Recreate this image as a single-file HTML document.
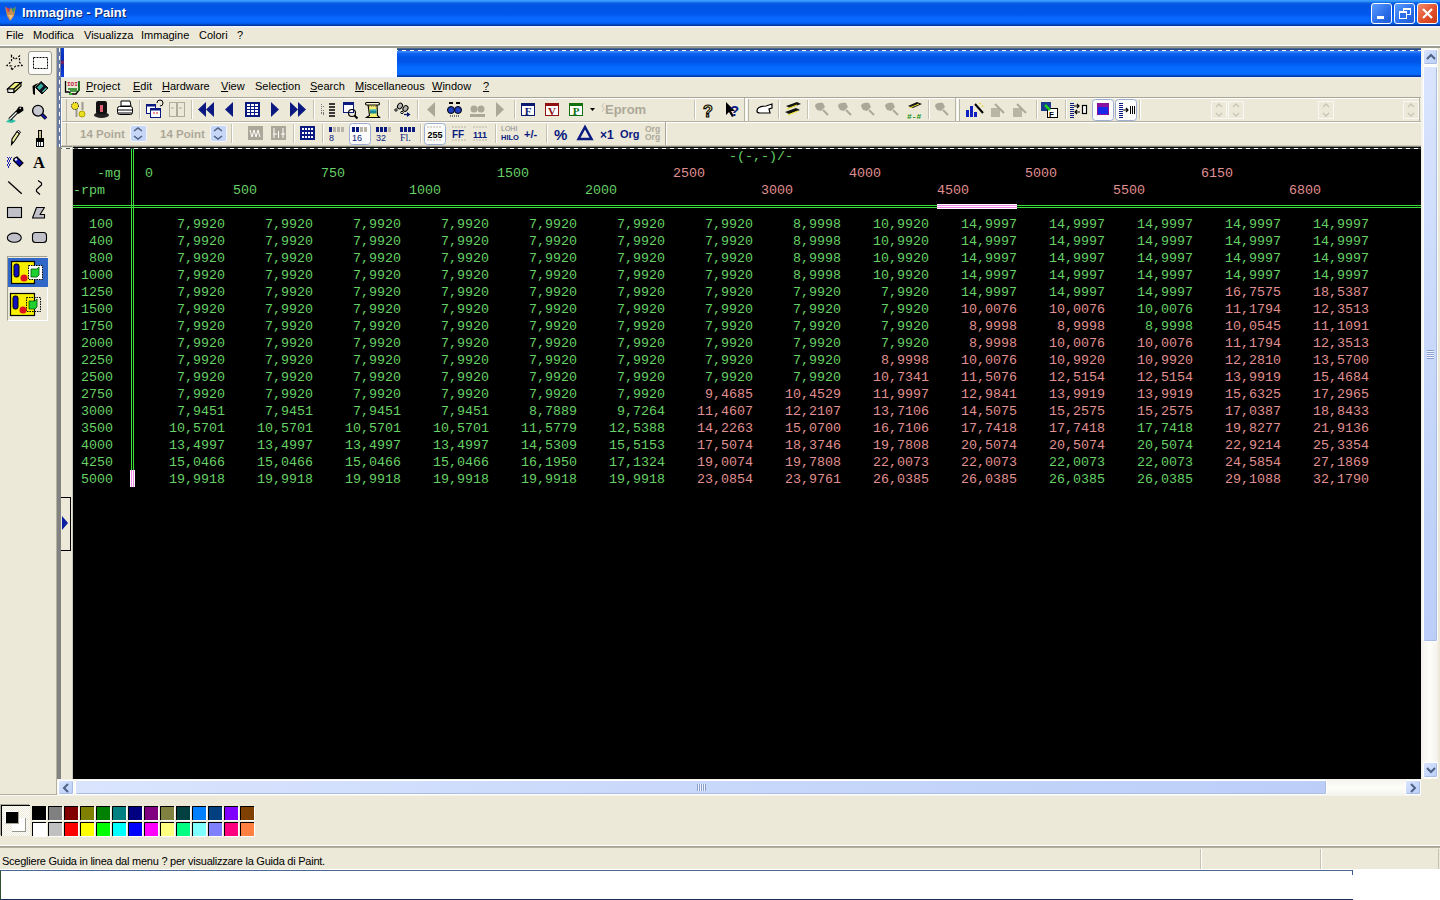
<!DOCTYPE html>
<html><head><meta charset="utf-8">
<style>
*{margin:0;padding:0;box-sizing:border-box}
html,body{width:1440px;height:900px;overflow:hidden;background:#ECE9D8;font-family:"Liberation Sans",sans-serif;font-size:11px;color:#000}
.a{position:absolute}
#title{left:0;top:0;width:1440px;height:26px;background:linear-gradient(#3A9CFF 0px,#3A9CFF 1px,#0A5EE0 3px,#0055E5 5px,#0057EA 14px,#0868FF 18px,#0866FF 22px,#0058E0 24px,#0038A0 25px,#0038A0 26px)}
#title .t{left:22px;top:5px;color:#fff;font-weight:bold;font-size:13px;text-shadow:1px 1px 0 #0A246A}
.wb{top:3px;width:21px;height:21px;border:1px solid #fff;border-radius:3px;background:linear-gradient(135deg,#5A9BFF,#2B6DE8 60%,#1F5BD6)}
#menu{left:0;top:26px;width:1440px;height:20px;background:linear-gradient(#F0F2FF 0,#F0F2FF 1px,#ECE9D8 2px)}
#menu span{position:absolute;top:3px;font-size:11px}
#sep1{left:0;top:45px;width:1440px;height:1px;background:#fff}
#sep2{left:0;top:46px;width:1440px;height:2px;background:#9D9D8F}
#tools{left:0;top:48px;width:57px;height:748px;background:#ECE9D8}
#cvborder{left:57px;top:48px;width:4px;height:731px;background:#828280}
#shot{left:61px;top:48px;width:1361px;height:731px;background:#ECE9D8}
#black{left:73px;top:147px;width:1348px;height:632px;background:#000}
#vscroll{left:1421px;top:48px;width:17px;height:731px;background:linear-gradient(90deg,#F3F1EA,#FEFEFB 50%,#F3F1EA)}
#hscroll{left:57px;top:779px;width:1364px;height:17px;background:linear-gradient(#F3F1EA,#FEFEFB 50%,#F3F1EA)}
.sb{position:absolute;background:linear-gradient(135deg,#DAE4FD,#C8D8FB 50%,#BCCEF8);border:1px solid #fff;box-shadow:inset -1px -1px 0 #A8BCE4;border-radius:2px}
#palette{left:0;top:796px;width:1440px;height:50px;background:#ECE9D8}
#status{left:0;top:846px;width:1440px;height:24px;background:#ECE9D8}
#bottom{left:0;top:869px;width:1440px;height:31px;background:#fff}
.c,.h{position:absolute;font-family:"Liberation Mono",monospace;font-size:13.33px;line-height:17px;white-space:pre;color:#66D266}
.c{width:88px;text-align:right}
.r{color:#E09090}
.gl{position:absolute;background:#38E038}
.im{top:80px;font-size:11px;line-height:13px;white-space:nowrap}
.im u{text-underline-offset:1px}
</style></head><body>
<div id="title" class="a">
<svg class="a" style="left:3px;top:4px" width="15" height="18" viewBox="0 0 15 18"><path d="M2 2 L4 12 L7 17 L11 12 L13 2 L10 8 L8 3 L6 8 Z" fill="#C89050"/><path d="M3 3 L5 9 L7 5Z" fill="#E04040"/><path d="M9 5 L11 9 L12 3Z" fill="#40A040"/><path d="M5 11 L10 11 L8 16Z" fill="#F0C080"/></svg>
<div class="t a">Immagine - Paint</div>
<div class="wb a" style="left:1371px"><div class="a" style="left:5px;top:12px;width:7px;height:3px;background:#fff"></div></div>
<div class="wb a" style="left:1394px"><div class="a" style="left:8px;top:4px;width:8px;height:7px;border:1px solid #fff;border-top-width:2px"></div><div class="a" style="left:4px;top:7px;width:8px;height:8px;border:1px solid #fff;border-top-width:2px;background:#2F6FE8"></div></div>
<div class="wb a" style="left:1417px;background:linear-gradient(135deg,#F08A6A,#E2502A 55%,#C83A18)"><svg class="a" style="left:3px;top:3px" width="13" height="13"><path d="M2 2L11 11M11 2L2 11" stroke="#fff" stroke-width="2.2"/></svg></div>
</div>
<div id="menu" class="a">
<span style="left:6px">File</span><span style="left:33px">Modifica</span><span style="left:84px">Visualizza</span><span style="left:141px">Immagine</span><span style="left:199px">Colori</span><span style="left:237px">?</span>
</div>
<div id="sep1" class="a"></div><div id="sep2" class="a"></div>
<div id="tools" class="a">
<div class="a" style="left:56px;top:0;width:1px;height:747px;background:#B4B1A2"></div><div class="a" style="left:0;top:746px;width:57px;height:1px;background:#B4B1A2"></div><div class="a" style="left:0;top:747px;width:57px;height:1px;background:#F6F4EC"></div>
<div class="a" style="left:28px;top:3px;width:24px;height:24px;background:#FBFBF9;border:1px solid #9B9B8F;border-radius:3px"></div>
<svg class="a" style="left:0;top:0" width="56" height="280" viewBox="0 48 56 280">
<path d="M11.5 55.5 L11.5 61 L7 65.5 L11.5 66 L11.5 70.5 L15.5 66 L22 65.5 L19.5 62 L19.5 56 L15 59.5 Z" fill="none" stroke="#000" stroke-width="1.2" stroke-dasharray="2 1.6"/>
<rect x="33.5" y="57.5" width="14" height="11" fill="none" stroke="#000" stroke-width="1" stroke-dasharray="2 1"/>
<path d="M7.5 89 L14.5 82.5 L21 82.5 L14 89 Z" fill="#F0F080" stroke="#000" stroke-width="1.1"/>
<path d="M7.5 89 L14 89 L14 92.5 L8 92.5 Z" fill="#E8E8E8" stroke="#000" stroke-width="1.1"/>
<path d="M14 89 L21 82.5 L21 86 L14 92.5 Z" fill="#D8D870" stroke="#000" stroke-width="1.1"/>
<path d="M36 84 L38.5 83 L35 87 L35 95 L33 94 L32.5 86 Z" fill="#000"/>
<path d="M41 81.5 L48 88 L42 94 L35.5 87.5 Z" fill="#101020" stroke="#000"/>
<path d="M37 87.5 L41 83.5 L43.5 86 L39.5 90 Z" fill="#30B0A0"/>
<path d="M42.5 92 L46.5 88" stroke="#50C8A8" stroke-width="1.2"/>
<path d="M6 122 L10 118 L16 121 L12 123 Z" fill="#30C0A8"/>
<path d="M9.5 119.5 L17 112" stroke="#000" stroke-width="3.2"/><path d="M9.5 119.5 L17 112" stroke="#fff" stroke-width="1.2"/>
<path d="M15.5 111.5 L19 106.5 L23 107 L23.5 110.5 L18.5 114 Z" fill="#000"/><circle cx="20.3" cy="108.3" r=".8" fill="#fff"/>
<circle cx="38" cy="110.7" r="5.4" fill="#C8C8D0" stroke="#000" stroke-width="1.3"/>
<path d="M42 114.5 L46 118.5" stroke="#000" stroke-width="3.6"/><path d="M42 114.5 L46 118.5" stroke="#1818A0" stroke-width="2"/>
<path d="M11.5 144.5 L12 139 L17 131.5 L19.5 133.5 L14.5 141 Z" fill="#F0F0A0" stroke="#000" stroke-width="1.1"/>
<path d="M17 131.5 L18.5 130.5 L20.5 132 L19.5 133.5 Z" fill="#fff" stroke="#000" stroke-width="1"/>
<path d="M11.5 144.5 L12.2 141 L13.6 142.2 Z" fill="#000"/>
<rect x="38.5" y="130.5" width="3" height="8" fill="#C8C090" stroke="#000"/>
<rect x="36.5" y="138.5" width="7" height="3" fill="#000" stroke="#000"/>
<rect x="36.5" y="141.5" width="7" height="5" fill="#fff" stroke="#000"/><path d="M38.5 142V146M40.5 142V146" stroke="#000" stroke-width=".8"/>
<g fill="#2020B0"><rect x="7" y="157" width="1" height="1"/><rect x="9" y="157" width="1" height="1"/><rect x="11" y="157" width="1" height="1"/><rect x="8" y="159" width="1" height="1"/><rect x="10" y="159" width="1" height="1"/><rect x="7" y="161" width="1" height="1"/><rect x="9" y="161" width="1" height="1"/><rect x="8" y="163" width="1" height="1"/><rect x="10" y="163" width="1" height="1"/><rect x="7" y="165" width="1" height="1"/><rect x="9" y="165" width="1" height="1"/><rect x="8" y="167" width="1" height="1"/><rect x="8" y="158" width="1" height="1"/><rect x="10" y="158" width="1" height="1"/><rect x="7" y="160" width="1" height="1"/><rect x="9" y="160" width="1" height="1"/><rect x="8" y="162" width="1" height="1"/><rect x="7" y="164" width="1" height="1"/><rect x="9" y="164" width="1" height="1"/><rect x="8" y="166" width="1" height="1"/></g>
<path d="M14 158.5 L17 157 L23 163 L19.5 166.5 L13.5 160.5 Z" fill="#0A0AA8" stroke="#000" stroke-width="1.1"/>
<path d="M14.5 159 L16.5 158 L17.5 160 L15.5 161 Z" fill="#fff"/>
<text x="39" y="167.5" text-anchor="middle" font-family="Liberation Serif" font-weight="bold" font-size="16.5" fill="#000">A</text>
<path d="M8.2 181.4 L21.7 193.7" stroke="#000" stroke-width="1.3"/>
<path d="M38 180.5 L41.5 183 L41.5 185 L36.5 189.5 L36.5 191.5 L40 194.5" stroke="#000" stroke-width="1.2" fill="none"/>
<rect x="7.5" y="207.5" width="14" height="10" fill="#C0C0C8" stroke="#000" stroke-width="1.1"/>
<path d="M36.5 207.5 L44.5 207.5 L40 214.5 L44.5 214.5 L44.5 218 L32.5 218 Z" fill="#C0C0C8" stroke="#000" stroke-width="1.1" stroke-linejoin="round"/>
<ellipse cx="14.3" cy="237.7" rx="7" ry="4.6" fill="#C0C0C8" stroke="#000" stroke-width="1.1"/>
<rect x="32.5" y="232.5" width="14" height="10" rx="3" fill="#C0C0C8" stroke="#000" stroke-width="1.1"/>
</svg>
<div class="a" style="left:7px;top:208px;width:41px;height:65px;border:1px solid #fff;border-top-color:#A0A090;border-left-color:#A0A090"></div>
<div class="a" style="left:8px;top:210px;width:40px;height:29px;background:#3168C8"></div>
<svg class="a" style="left:8px;top:210px" width="40" height="64" viewBox="0 0 40 64">
<rect x="3.5" y="3.5" width="23" height="22" fill="#F8F000" stroke="#000" stroke-width="1.2"/>
<rect x="20.5" y="7.5" width="14" height="14" fill="#fff" stroke="#000" stroke-dasharray="1.5 1"/>
<rect x="6" y="6" width="5" height="13" rx="2" fill="#1010C0" stroke="#000"/><circle cx="16" cy="20" r="3.5" fill="#E01020"/>
<path d="M23 11 L29 11 L31 9 L31 17 L29 19 L23 19Z" fill="#20D030" stroke="#005000" stroke-width="0.8"/>
<rect x="2.5" y="35.5" width="24" height="22" fill="#F8F000" stroke="#000" stroke-width="1.2"/>
<rect x="18.5" y="39.5" width="14" height="14" fill="none" stroke="#000" stroke-dasharray="1.5 1"/>
<rect x="5" y="38" width="5" height="13" rx="2" fill="#1010C0" stroke="#000"/><circle cx="15" cy="52" r="3.5" fill="#E01020"/>
<path d="M21 43 L27 43 L29 41 L29 49 L27 51 L21 51Z" fill="#20D030" stroke="#005000" stroke-width="0.8"/>
</svg>
</div>
<div id="shot" class="a"></div>
<div id="cvborder" class="a"></div>
<div class="a" style="left:57px;top:48px;width:4px;height:99px;background:#6A7CA4"></div><div class="a" style="left:59px;top:48px;width:1px;height:99px;background:repeating-linear-gradient(#fff 0 4px,transparent 4px 8px)"></div>
<div class="a" style="left:61px;top:48px;width:336px;height:29px;background:#fff"></div>
<div class="a" style="left:61px;top:48px;width:3px;height:29px;background:linear-gradient(#1040D0,#0A2CB8 40%,#8A2050 50%,#0A2CB8 60%,#1040E0)"></div>
<div class="a" style="left:397px;top:48px;width:1024px;height:29px;background:linear-gradient(#4A6890 0,#4A6890 1px,#2A4A88 1px,#2A4A88 2px,#2A5CB8 2px,#2A5CB8 3px,#3A88FF 3px,#3A88FF 4px,#1466F2 5px,#0054E6 9px,#0054E6 14px,#0062F8 17px,#066CFF 20px,#066CFF 26px,#005CE8 27px,#003AA8 28px,#003AA8 29px)"></div>
<div class="a" style="left:397px;top:50px;width:1024px;height:1px;background:repeating-linear-gradient(90deg,#fff 0 4px,transparent 4px 8px) 5px 0/8px 1px"></div>
<div class="a" style="left:61px;top:77px;width:1360px;height:1px;background:#E8EEF8"></div>
<div class="a" style="left:61px;top:78px;width:1360px;height:20px;background:#ECE9D8"></div>
<svg class="a" style="left:64px;top:79px" width="18" height="17" viewBox="0 0 18 17"><path d="M1.5 2V13H5L7 15H12L15 11V2" fill="none" stroke="#000" stroke-width="1.3"/><text x="3" y="7" font-family="Liberation Mono" font-weight="bold" font-size="6" fill="#C02040">IOI</text><path d="M4 10h9M6 12h7" stroke="#108010" stroke-width="1.3"/><path d="M15 3V12" stroke="#108010" stroke-width="1.5"/><path d="M5 15h3" stroke="#30B030" stroke-width="2"/></svg>
<div class="im a" style="left:86px"><u>P</u>roject</div>
<div class="im a" style="left:133px"><u>E</u>dit</div>
<div class="im a" style="left:162px"><u>H</u>ardware</div>
<div class="im a" style="left:221px"><u>V</u>iew</div>
<div class="im a" style="left:255px">Selec<u>t</u>ion</div>
<div class="im a" style="left:310px"><u>S</u>earch</div>
<div class="im a" style="left:355px"><u>M</u>iscellaneous</div>
<div class="im a" style="left:432px"><u>W</u>indow</div>
<div class="im a" style="left:483px"><u>?</u></div>
<svg class="a" style="left:0;top:0" width="1440" height="150" viewBox="0 0 1440 150"><rect x="61" y="97" width="1360" height="49" fill="#ECE9D8"/><path d="M61 97.5H1421" stroke="#A8A596"/><path d="M61 98.5H1421" stroke="#fff"/><path d="M61 121.5H1421" stroke="#B5B2A3"/><path d="M61 122.5H1421" stroke="#fff"/><path d="M61 145.5H1421" stroke="#C8C5B5"/><path d="M61 146.5H1421" stroke="#8A887C"/><path d="M61.5 98V146" stroke="#fff"/><path d="M66.5 99V121M66.5 123V145" stroke="#B8B5A6"/><path d="M744.5 98V121" stroke="#B8B5A6"/><path d="M746.5 98V121" stroke="#fff" stroke-width="2"/><path d="M748.5 99V121" stroke="#B8B5A6"/><path d="M955.5 98V121" stroke="#B8B5A6"/><path d="M957.5 98V121" stroke="#fff" stroke-width="2"/><path d="M959.5 99V121" stroke="#B8B5A6"/><path d="M1419.5 98V121" stroke="#B8B5A6"/><path d="M665.5 122V145" stroke="#A8A596"/><path d="M666.5 122V145" stroke="#fff"/><path d="M139.5 100V119" stroke="#C5C2B2"/><path d="M140.5 100V119" stroke="#fff"/><path d="M191.5 100V119" stroke="#C5C2B2"/><path d="M192.5 100V119" stroke="#fff"/><path d="M313.5 100V119" stroke="#C5C2B2"/><path d="M314.5 100V119" stroke="#fff"/><path d="M388.5 100V119" stroke="#C5C2B2"/><path d="M389.5 100V119" stroke="#fff"/><path d="M417.5 100V119" stroke="#C5C2B2"/><path d="M418.5 100V119" stroke="#fff"/><path d="M514.5 100V119" stroke="#C5C2B2"/><path d="M515.5 100V119" stroke="#fff"/><path d="M694.5 100V119" stroke="#C5C2B2"/><path d="M695.5 100V119" stroke="#fff"/><path d="M778.5 100V119" stroke="#C5C2B2"/><path d="M779.5 100V119" stroke="#fff"/><path d="M807.5 100V119" stroke="#C5C2B2"/><path d="M808.5 100V119" stroke="#fff"/><path d="M928.5 100V119" stroke="#C5C2B2"/><path d="M929.5 100V119" stroke="#fff"/><path d="M1036.5 100V119" stroke="#C5C2B2"/><path d="M1037.5 100V119" stroke="#fff"/><path d="M1065.5 100V119" stroke="#C5C2B2"/><path d="M1066.5 100V119" stroke="#fff"/><path d="M1139.5 100V119" stroke="#C5C2B2"/><path d="M1140.5 100V119" stroke="#fff"/><path d="M231.5 124V143" stroke="#C5C2B2"/><path d="M232.5 124V143" stroke="#fff"/><path d="M293.5 124V143" stroke="#C5C2B2"/><path d="M294.5 124V143" stroke="#fff"/><path d="M322.5 124V143" stroke="#C5C2B2"/><path d="M323.5 124V143" stroke="#fff"/><path d="M420.5 124V143" stroke="#C5C2B2"/><path d="M421.5 124V143" stroke="#fff"/><path d="M495.5 124V143" stroke="#C5C2B2"/><path d="M496.5 124V143" stroke="#fff"/><path d="M546.5 124V143" stroke="#C5C2B2"/><path d="M547.5 124V143" stroke="#fff"/><path d="M76.5 102V117M82.5 102V110" stroke="#9A9A90" stroke-width="2"/><circle cx="75" cy="106" r="3.5" fill="#F0E020" stroke="#000" stroke-dasharray="1 1"/><circle cx="82" cy="114" r="3" fill="#E8E020" stroke="#B0A000"/><ellipse cx="101.5" cy="115" rx="7.5" ry="3" fill="#222"/><rect x="96" y="101" width="11" height="13" rx="2" fill="#111"/><rect x="100" y="105" width="3" height="7" fill="#E06070"/><path d="M121 101H130L131 106H121Z" fill="#fff" stroke="#000"/><rect x="117.5" y="106.5" width="15" height="8" rx="2" fill="#fff" stroke="#000"/><path d="M118 110H132M118 113H132" stroke="#000"/><rect x="146.5" y="104.5" width="9" height="9" fill="#fff" stroke="#0A1A80"/><rect x="146.5" y="104.5" width="9" height="2" fill="#0A1A80"/><rect x="150.5" y="108.5" width="10" height="9" fill="#fff" stroke="#0A1A80"/><rect x="150.5" y="108.5" width="10" height="2" fill="#0A1A80"/><path d="M153 113H155M156 113H158" stroke="#D02020"/><path d="M157 103 A3 3 0 1 1 160 106" stroke="#000" fill="none"/><rect x="169.5" y="102.5" width="7" height="14" fill="none" stroke="#B0AC9C"/><rect x="177.5" y="102.5" width="7" height="14" fill="none" stroke="#B0AC9C"/><path d="M171 108h3M179 108h3" stroke="#B0AC9C"/><path d="M198 109.5L206 102V117Z M206 109.5L214 102V117Z" fill="#0A1A80"/><path d="M225 109.5L233 102V117Z" fill="#0A1A80"/><rect x="245" y="102" width="15" height="15" fill="#0A1A80"/><rect x="247" y="104" width="3" height="2" fill="#fff"/><rect x="247" y="107" width="3" height="2" fill="#fff"/><rect x="247" y="110" width="3" height="2" fill="#fff"/><rect x="247" y="113" width="3" height="2" fill="#fff"/><rect x="251" y="104" width="3" height="2" fill="#fff"/><rect x="251" y="107" width="3" height="2" fill="#fff"/><rect x="251" y="110" width="3" height="2" fill="#fff"/><rect x="251" y="113" width="3" height="2" fill="#fff"/><rect x="255" y="104" width="3" height="2" fill="#fff"/><rect x="255" y="107" width="3" height="2" fill="#fff"/><rect x="255" y="110" width="3" height="2" fill="#fff"/><rect x="255" y="113" width="3" height="2" fill="#fff"/><path d="M271 102V117L279 109.5Z" fill="#0A1A80"/><path d="M290 102V117L298 109.5Z M298 102V117L306 109.5Z" fill="#0A1A80"/><path d="M321.5 104V114M321 106.5h4M321 113.5h4M323.5 110v5" stroke="#777" stroke-dasharray="1 1"/><path d="M329 104h6M329 107h6M329 110h6M329 113h6M329 116h6" stroke="#000" stroke-width="1.5"/><rect x="343.5" y="102.5" width="10" height="10" fill="#fff" stroke="#0A1A80"/><rect x="343" y="102" width="11" height="3" fill="#0A1A80"/><circle cx="352" cy="113" r="3.5" fill="none" stroke="#000" stroke-width="1.2"/><path d="M354.5 115.5L357.5 118.5" stroke="#000" stroke-width="2"/><path d="M368 104.5L369.5 115.5L366.5 117.5H379.5L377.5 115.5L377 104.5Z" fill="#F4F070" stroke="#000" stroke-width="1.1"/><rect x="365.5" y="102.5" width="14" height="2.5" rx="1.2" fill="#F8F8D0" stroke="#000" stroke-width="1.1"/><path d="M369 106.5h7" stroke="#B08060" stroke-dasharray="1 1"/><rect x="370" y="109.5" width="6.5" height="4" fill="#1A8890"/><rect x="370" y="109.5" width="6.5" height="1" fill="#60D0E0"/><ellipse cx="400" cy="106" rx="2.3" ry="3" transform="rotate(35 400 106)" fill="#B8B8B0" stroke="#000" stroke-width="1"/><ellipse cx="405.5" cy="108.5" rx="2.3" ry="3" transform="rotate(35 405.5 108.5)" fill="#B8B8B0" stroke="#000" stroke-width="1"/><ellipse cx="396" cy="110" rx="1.3" ry="1.1" fill="#fff" stroke="#000" stroke-width="1"/><ellipse cx="402" cy="112.5" rx="1.3" ry="1.1" fill="#fff" stroke="#000" stroke-width="1"/><path d="M404 114.5H409" stroke="#0A1A70" stroke-width="1.3"/><path d="M407 112L410.5 114.5L407 117Z" fill="#0A1A70"/><path d="M427 109.5L435 102V117Z" fill="#ACA899"/><path d="M496 102V117L504 109.5Z" fill="#ACA899"/><circle cx="451" cy="110" r="3.5" fill="#2040C0" stroke="#000"/><circle cx="458" cy="110" r="3.5" fill="#2040C0" stroke="#000"/><path d="M449 103h4M456 103h4" stroke="#000" stroke-width="2"/><path d="M450 116h10" stroke="#000" stroke-dasharray="1 1"/><circle cx="474" cy="109" r="3.5" fill="#ACA899"/><circle cx="481" cy="109" r="3.5" fill="#ACA899"/><rect x="470" y="114" width="15" height="3" fill="#ACA899"/><rect x="521.5" y="103.5" width="13" height="12" fill="#fff" stroke="#0A1A70"/><rect x="521" y="103" width="14" height="3" fill="#0A1A70"/><text x="528" y="115" text-anchor="middle" font-family="Liberation Serif" font-weight="bold" font-size="11" fill="#0A1A70">F</text><rect x="545.5" y="103.5" width="13" height="12" fill="#fff" stroke="#901010"/><rect x="545" y="103" width="14" height="3" fill="#901010"/><text x="552" y="115" text-anchor="middle" font-family="Liberation Serif" font-weight="bold" font-size="11" fill="#901010">V</text><rect x="569.5" y="103.5" width="13" height="12" fill="#fff" stroke="#107010"/><rect x="569" y="103" width="14" height="3" fill="#107010"/><text x="576" y="115" text-anchor="middle" font-family="Liberation Serif" font-weight="bold" font-size="11" fill="#107010">P</text><path d="M590 108h5l-2.5 3z" fill="#000"/><text x="605" y="114" font-family="Liberation Sans" font-weight="bold" font-size="13" fill="#ACA899">Eprom</text><path d="M604 103l-2 3 2 3-2 3" stroke="#C8C5B8" fill="none"/><text x="703" y="117" font-family="Liberation Sans" font-weight="bold" font-size="16" fill="#F8F0A0" stroke="#000" stroke-width="1.1">?</text><path d="M726 102V115L729 112L732 117L734 116L731 111H735Z" fill="#000"/><text x="730" y="116" font-family="Liberation Sans" font-weight="bold" font-size="15" fill="#0A1A80">?</text><path d="M757 111C757 107 762 106 766 106L772 104V108L769 109L770 113H760C758 113 757 112 757 111Z" fill="#fff" stroke="#000" stroke-width="1.2"/><path d="M786 106L797 102L801 104L790 108Z" fill="#111"/><path d="M785 112L796 108L800 110L789 114Z" fill="#111"/><path d="M787 109L797 105M788 115L798 111" stroke="#E8E030" stroke-width="1.2"/><path d="M815 106C815 103 820 102 823 103L825 107L821 111L817 110Z" fill="#ACA899"/><path d="M823 110L828 115" stroke="#ACA899" stroke-width="2"/><path d="M838 106C838 103 843 102 846 103L848 107L844 111L840 110Z" fill="#ACA899"/><path d="M846 110L851 115" stroke="#ACA899" stroke-width="2"/><path d="M861 106C861 103 866 102 869 103L871 107L867 111L863 110Z" fill="#ACA899"/><path d="M869 110L874 115" stroke="#ACA899" stroke-width="2"/><path d="M885 106C885 103 890 102 893 103L895 107L891 111L887 110Z" fill="#ACA899"/><path d="M893 110L898 115" stroke="#ACA899" stroke-width="2"/><path d="M935 106C935 103 940 102 943 103L945 107L941 111L937 110Z" fill="#ACA899"/><path d="M943 110L948 115" stroke="#ACA899" stroke-width="2"/><path d="M908 106L917 102L922 104L913 108Z" fill="#111"/><path d="M909 108L919 104" stroke="#E8E030"/><text x="907" y="119" font-family="Liberation Mono" font-weight="bold" font-size="8" fill="#109010">#-#</text><rect x="966" y="110" width="3" height="7" fill="#1020C0"/><rect x="970" y="106" width="3" height="11" fill="#1020C0"/><rect x="974" y="112" width="3" height="5" fill="#1020C0"/><path d="M975 104L983 113" stroke="#000" stroke-width="2"/><path d="M979 103l2 1M982 105l1 2" stroke="#E8D020"/><rect x="991" y="108" width="9" height="9" fill="#ACA899" opacity=".8"/><path d="M995 104L1004 113" stroke="#ACA899" stroke-width="2"/><rect x="1013" y="108" width="9" height="9" fill="#ACA899" opacity=".8"/><path d="M1017 104L1026 113" stroke="#ACA899" stroke-width="2"/><rect x="1041" y="102" width="10" height="9" fill="#1A3A90"/><rect x="1047.5" y="108.5" width="10" height="9" fill="#fff" stroke="#000"/><text x="1049" y="116.5" font-family="Liberation Sans" font-weight="bold" font-size="8" fill="#000">F</text><path d="M1045 105L1050 110" stroke="#20D020" stroke-width="2.5"/><path d="M1070 103.5h4M1070 105.5h4M1070 107.5h4M1070 109.5h4M1070 111.5h4M1070 113.5h4M1070 115.5h4M1070 117.5h4" stroke="#0A1A80"/><path d="M1074 106h5M1077 104l2 2-2 2M1080 112h-5M1077 110l-2 2 2 2" stroke="#000" stroke-width="1.2" fill="none"/><rect x="1082.5" y="105.5" width="4" height="8" fill="#fff" stroke="#000" stroke-width="1.2"/><rect x="1092.5" y="99.5" width="21" height="21" rx="3" fill="#FCFCFA" stroke="#9DAED0"/><rect x="1097" y="103" width="12" height="12" fill="#8A10A0"/><rect x="1098" y="107" width="10" height="7" fill="#1828E8"/><rect x="1115.5" y="99.5" width="21" height="21" rx="3" fill="#FCFCFA" stroke="#9DAED0"/><path d="M1119 103.5h4M1119 105.5h4M1119 107.5h4M1119 109.5h4M1119 111.5h4M1119 113.5h4M1119 115.5h4M1119 117.5h4" stroke="#0A1A80"/><path d="M1123 110h5M1126 108l2 2-2 2" stroke="#000" stroke-width="1.2" fill="none"/><path d="M1130.5 106V114M1132.5 106V114M1134.5 106V114" stroke="#000"/><rect x="1211.5" y="101.5" width="15" height="17" fill="none" stroke="#F8F8F4"/><path d="M1216 107l3-3 3 3M1216 113l3 3 3-3" stroke="#C8C5B8" stroke-width="1.3" fill="none"/><rect x="1228.5" y="101.5" width="15" height="17" fill="none" stroke="#F8F8F4"/><path d="M1233 107l3-3 3 3M1233 113l3 3 3-3" stroke="#C8C5B8" stroke-width="1.3" fill="none"/><rect x="1318.5" y="101.5" width="15" height="17" fill="none" stroke="#F8F8F4"/><path d="M1323 107l3-3 3 3M1323 113l3 3 3-3" stroke="#C8C5B8" stroke-width="1.3" fill="none"/><rect x="1403.5" y="101.5" width="15" height="17" fill="none" stroke="#F8F8F4"/><path d="M1408 107l3-3 3 3M1408 113l3 3 3-3" stroke="#C8C5B8" stroke-width="1.3" fill="none"/><text x="80" y="138" font-family="Liberation Sans" font-weight="bold" font-size="11.5" fill="#ACA899">14 Point</text><text x="160" y="138" font-family="Liberation Sans" font-weight="bold" font-size="11.5" fill="#ACA899">14 Point</text><rect x="130.5" y="125.5" width="16" height="16" rx="2" fill="#C6D6F6" stroke="#F4F6FC"/><path d="M134 131l4-3 4 3M134 136l4 3 4-3" stroke="#4D6185" stroke-width="1.5" fill="none"/><rect x="210.5" y="125.5" width="16" height="16" rx="2" fill="#C6D6F6" stroke="#F4F6FC"/><path d="M214 131l4-3 4 3M214 136l4 3 4-3" stroke="#4D6185" stroke-width="1.5" fill="none"/><rect x="248" y="126" width="15" height="14" fill="#ACA899"/><path d="M250 130l2 7 2-7 2 7 2-7 2 7" stroke="#fff" fill="none"/><rect x="271" y="126" width="15" height="14" fill="#ACA899"/><path d="M274 128v10M278.5 131v7M283 128v10M273 134h4M281 134h4" stroke="#fff" fill="none"/><rect x="300" y="126" width="15" height="14" fill="#0A1A80"/><rect x="302" y="128" width="2" height="2" fill="#fff"/><rect x="302" y="132" width="2" height="2" fill="#fff"/><rect x="302" y="136" width="2" height="2" fill="#fff"/><rect x="305" y="128" width="2" height="2" fill="#fff"/><rect x="305" y="132" width="2" height="2" fill="#fff"/><rect x="305" y="136" width="2" height="2" fill="#fff"/><rect x="308" y="128" width="2" height="2" fill="#fff"/><rect x="308" y="132" width="2" height="2" fill="#fff"/><rect x="308" y="136" width="2" height="2" fill="#fff"/><rect x="311" y="128" width="2" height="2" fill="#fff"/><rect x="311" y="132" width="2" height="2" fill="#fff"/><rect x="311" y="136" width="2" height="2" fill="#fff"/><rect x="349.5" y="123.5" width="21" height="21" rx="3" fill="#FCFCFA" stroke="#9DAED0"/><rect x="329" y="127" width="3" height="5" fill="#0A1A80"/><rect x="333" y="127" width="3" height="5" fill="#B8B5A8"/><rect x="337" y="127" width="3" height="5" fill="#B8B5A8"/><rect x="341" y="127" width="3" height="5" fill="#B8B5A8"/><rect x="352" y="127" width="3" height="5" fill="#0A1A80"/><rect x="356" y="127" width="3" height="5" fill="#0A1A80"/><rect x="360" y="127" width="3" height="5" fill="#B8B5A8"/><rect x="364" y="127" width="3" height="5" fill="#B8B5A8"/><rect x="376" y="127" width="3" height="5" fill="#0A1A80"/><rect x="380" y="127" width="3" height="5" fill="#0A1A80"/><rect x="384" y="127" width="3" height="5" fill="#0A1A80"/><rect x="388" y="127" width="3" height="5" fill="#B8B5A8"/><rect x="400" y="127" width="3" height="5" fill="#0A1A80"/><rect x="404" y="127" width="3" height="5" fill="#0A1A80"/><rect x="408" y="127" width="3" height="5" fill="#0A1A80"/><rect x="412" y="127" width="3" height="5" fill="#0A1A80"/><text x="329" y="141" font-family="Liberation Sans" font-size="9" fill="#0A1A80">8</text><text x="352" y="141" font-family="Liberation Sans" font-size="9" fill="#0A1A80">16</text><text x="376" y="141" font-family="Liberation Sans" font-size="9" fill="#0A1A80">32</text><text x="400" y="141" font-family="Liberation Serif" font-size="10" fill="#0A1A80">Fl.</text><rect x="424.5" y="123.5" width="21" height="21" rx="3" fill="#FCFCFA" stroke="#9DAED0"/><text x="435" y="138" text-anchor="middle" font-family="Liberation Sans" font-weight="bold" font-size="9" fill="#000">255</text><text x="458" y="138" text-anchor="middle" font-family="Liberation Sans" font-weight="bold" font-size="10" fill="#0A1A80">FF</text><text x="480" y="138" text-anchor="middle" font-family="Liberation Sans" font-weight="bold" font-size="9" fill="#0A1A80">111</text><path d="M427 127h14M427 140h14" stroke="#B8B5A8" stroke-dasharray="2 1"/><path d="M452 127h14M452 140h14" stroke="#B8B5A8" stroke-dasharray="2 1"/><path d="M473 127h14M473 140h14" stroke="#B8B5A8" stroke-dasharray="2 1"/><text x="501" y="131" font-family="Liberation Sans" font-size="7" fill="#888">LOHI</text><text x="501" y="140" font-family="Liberation Sans" font-weight="bold" font-size="7.5" fill="#0A1A80">HILO</text><text x="524" y="138" font-family="Liberation Sans" font-weight="bold" font-size="11" fill="#0A1A80">+/-</text><text x="554" y="140" font-family="Liberation Sans" font-weight="bold" font-size="15" fill="#0A1A80">%</text><path d="M585 127L591.5 139H578.5Z" fill="none" stroke="#0A1A80" stroke-width="2.5"/><text x="600" y="139" font-family="Liberation Sans" font-weight="bold" font-size="12" fill="#0A1A80">×1</text><text x="620" y="138" font-family="Liberation Sans" font-weight="bold" font-size="11" fill="#0A1A80">Org</text><text x="645" y="132" font-family="Liberation Sans" font-weight="bold" font-size="8.5" fill="#ACA899">Org</text><text x="645" y="140" font-family="Liberation Sans" font-weight="bold" font-size="8.5" fill="#ACA899">Org</text></svg>
<div id="black" class="a"></div>
<div class="a" style="left:61px;top:148px;width:1360px;height:1px;background:repeating-linear-gradient(90deg,#fff 0 4px,#4A5858 4px 8px) 1px 0/8px 1px"></div>
<div class="a" style="left:72px;top:146px;width:1px;height:633px;background:#C8C6BA"></div>
<div class="gl" style="left:73px;top:205px;width:1348px;height:1px"></div>
<div class="gl" style="left:73px;top:207px;width:1348px;height:1px"></div>
<div class="gl" style="left:131px;top:149px;width:1px;height:321px"></div>
<div class="gl" style="left:133px;top:149px;width:1px;height:321px"></div>
<div class="a" style="left:937px;top:204px;width:80px;height:5px;background:repeating-linear-gradient(#fff 0 1px,#F088E8 1px 2px)"></div>
<div class="a" style="left:130px;top:470px;width:5px;height:17px;background:repeating-linear-gradient(90deg,#fff 0 1px,#F088E8 1px 2px)"></div>
<div class="c" style="top:216px;left:33px;width:80px;text-align:right">100</div>
<div class="c g" style="top:216px;left:137px">7,9920</div>
<div class="c g" style="top:216px;left:225px">7,9920</div>
<div class="c g" style="top:216px;left:313px">7,9920</div>
<div class="c g" style="top:216px;left:401px">7,9920</div>
<div class="c g" style="top:216px;left:489px">7,9920</div>
<div class="c g" style="top:216px;left:577px">7,9920</div>
<div class="c g" style="top:216px;left:665px">7,9920</div>
<div class="c g" style="top:216px;left:753px">8,9998</div>
<div class="c g" style="top:216px;left:841px">10,9920</div>
<div class="c g" style="top:216px;left:929px">14,9997</div>
<div class="c g" style="top:216px;left:1017px">14,9997</div>
<div class="c g" style="top:216px;left:1105px">14,9997</div>
<div class="c g" style="top:216px;left:1193px">14,9997</div>
<div class="c g" style="top:216px;left:1281px">14,9997</div>
<div class="c" style="top:233px;left:33px;width:80px;text-align:right">400</div>
<div class="c g" style="top:233px;left:137px">7,9920</div>
<div class="c g" style="top:233px;left:225px">7,9920</div>
<div class="c g" style="top:233px;left:313px">7,9920</div>
<div class="c g" style="top:233px;left:401px">7,9920</div>
<div class="c g" style="top:233px;left:489px">7,9920</div>
<div class="c g" style="top:233px;left:577px">7,9920</div>
<div class="c g" style="top:233px;left:665px">7,9920</div>
<div class="c g" style="top:233px;left:753px">8,9998</div>
<div class="c g" style="top:233px;left:841px">10,9920</div>
<div class="c g" style="top:233px;left:929px">14,9997</div>
<div class="c g" style="top:233px;left:1017px">14,9997</div>
<div class="c g" style="top:233px;left:1105px">14,9997</div>
<div class="c g" style="top:233px;left:1193px">14,9997</div>
<div class="c g" style="top:233px;left:1281px">14,9997</div>
<div class="c" style="top:250px;left:33px;width:80px;text-align:right">800</div>
<div class="c g" style="top:250px;left:137px">7,9920</div>
<div class="c g" style="top:250px;left:225px">7,9920</div>
<div class="c g" style="top:250px;left:313px">7,9920</div>
<div class="c g" style="top:250px;left:401px">7,9920</div>
<div class="c g" style="top:250px;left:489px">7,9920</div>
<div class="c g" style="top:250px;left:577px">7,9920</div>
<div class="c g" style="top:250px;left:665px">7,9920</div>
<div class="c g" style="top:250px;left:753px">8,9998</div>
<div class="c g" style="top:250px;left:841px">10,9920</div>
<div class="c g" style="top:250px;left:929px">14,9997</div>
<div class="c g" style="top:250px;left:1017px">14,9997</div>
<div class="c g" style="top:250px;left:1105px">14,9997</div>
<div class="c g" style="top:250px;left:1193px">14,9997</div>
<div class="c g" style="top:250px;left:1281px">14,9997</div>
<div class="c" style="top:267px;left:33px;width:80px;text-align:right">1000</div>
<div class="c g" style="top:267px;left:137px">7,9920</div>
<div class="c g" style="top:267px;left:225px">7,9920</div>
<div class="c g" style="top:267px;left:313px">7,9920</div>
<div class="c g" style="top:267px;left:401px">7,9920</div>
<div class="c g" style="top:267px;left:489px">7,9920</div>
<div class="c g" style="top:267px;left:577px">7,9920</div>
<div class="c g" style="top:267px;left:665px">7,9920</div>
<div class="c g" style="top:267px;left:753px">8,9998</div>
<div class="c g" style="top:267px;left:841px">10,9920</div>
<div class="c g" style="top:267px;left:929px">14,9997</div>
<div class="c g" style="top:267px;left:1017px">14,9997</div>
<div class="c g" style="top:267px;left:1105px">14,9997</div>
<div class="c g" style="top:267px;left:1193px">14,9997</div>
<div class="c g" style="top:267px;left:1281px">14,9997</div>
<div class="c" style="top:284px;left:33px;width:80px;text-align:right">1250</div>
<div class="c g" style="top:284px;left:137px">7,9920</div>
<div class="c g" style="top:284px;left:225px">7,9920</div>
<div class="c g" style="top:284px;left:313px">7,9920</div>
<div class="c g" style="top:284px;left:401px">7,9920</div>
<div class="c g" style="top:284px;left:489px">7,9920</div>
<div class="c g" style="top:284px;left:577px">7,9920</div>
<div class="c g" style="top:284px;left:665px">7,9920</div>
<div class="c g" style="top:284px;left:753px">7,9920</div>
<div class="c g" style="top:284px;left:841px">7,9920</div>
<div class="c g" style="top:284px;left:929px">14,9997</div>
<div class="c g" style="top:284px;left:1017px">14,9997</div>
<div class="c g" style="top:284px;left:1105px">14,9997</div>
<div class="c r" style="top:284px;left:1193px">16,7575</div>
<div class="c r" style="top:284px;left:1281px">18,5387</div>
<div class="c" style="top:301px;left:33px;width:80px;text-align:right">1500</div>
<div class="c g" style="top:301px;left:137px">7,9920</div>
<div class="c g" style="top:301px;left:225px">7,9920</div>
<div class="c g" style="top:301px;left:313px">7,9920</div>
<div class="c g" style="top:301px;left:401px">7,9920</div>
<div class="c g" style="top:301px;left:489px">7,9920</div>
<div class="c g" style="top:301px;left:577px">7,9920</div>
<div class="c g" style="top:301px;left:665px">7,9920</div>
<div class="c g" style="top:301px;left:753px">7,9920</div>
<div class="c g" style="top:301px;left:841px">7,9920</div>
<div class="c r" style="top:301px;left:929px">10,0076</div>
<div class="c r" style="top:301px;left:1017px">10,0076</div>
<div class="c g" style="top:301px;left:1105px">10,0076</div>
<div class="c r" style="top:301px;left:1193px">11,1794</div>
<div class="c r" style="top:301px;left:1281px">12,3513</div>
<div class="c" style="top:318px;left:33px;width:80px;text-align:right">1750</div>
<div class="c g" style="top:318px;left:137px">7,9920</div>
<div class="c g" style="top:318px;left:225px">7,9920</div>
<div class="c g" style="top:318px;left:313px">7,9920</div>
<div class="c g" style="top:318px;left:401px">7,9920</div>
<div class="c g" style="top:318px;left:489px">7,9920</div>
<div class="c g" style="top:318px;left:577px">7,9920</div>
<div class="c g" style="top:318px;left:665px">7,9920</div>
<div class="c g" style="top:318px;left:753px">7,9920</div>
<div class="c g" style="top:318px;left:841px">7,9920</div>
<div class="c r" style="top:318px;left:929px">8,9998</div>
<div class="c r" style="top:318px;left:1017px">8,9998</div>
<div class="c g" style="top:318px;left:1105px">8,9998</div>
<div class="c r" style="top:318px;left:1193px">10,0545</div>
<div class="c r" style="top:318px;left:1281px">11,1091</div>
<div class="c" style="top:335px;left:33px;width:80px;text-align:right">2000</div>
<div class="c g" style="top:335px;left:137px">7,9920</div>
<div class="c g" style="top:335px;left:225px">7,9920</div>
<div class="c g" style="top:335px;left:313px">7,9920</div>
<div class="c g" style="top:335px;left:401px">7,9920</div>
<div class="c g" style="top:335px;left:489px">7,9920</div>
<div class="c g" style="top:335px;left:577px">7,9920</div>
<div class="c g" style="top:335px;left:665px">7,9920</div>
<div class="c g" style="top:335px;left:753px">7,9920</div>
<div class="c g" style="top:335px;left:841px">7,9920</div>
<div class="c r" style="top:335px;left:929px">8,9998</div>
<div class="c r" style="top:335px;left:1017px">10,0076</div>
<div class="c r" style="top:335px;left:1105px">10,0076</div>
<div class="c r" style="top:335px;left:1193px">11,1794</div>
<div class="c r" style="top:335px;left:1281px">12,3513</div>
<div class="c" style="top:352px;left:33px;width:80px;text-align:right">2250</div>
<div class="c g" style="top:352px;left:137px">7,9920</div>
<div class="c g" style="top:352px;left:225px">7,9920</div>
<div class="c g" style="top:352px;left:313px">7,9920</div>
<div class="c g" style="top:352px;left:401px">7,9920</div>
<div class="c g" style="top:352px;left:489px">7,9920</div>
<div class="c g" style="top:352px;left:577px">7,9920</div>
<div class="c g" style="top:352px;left:665px">7,9920</div>
<div class="c g" style="top:352px;left:753px">7,9920</div>
<div class="c r" style="top:352px;left:841px">8,9998</div>
<div class="c r" style="top:352px;left:929px">10,0076</div>
<div class="c r" style="top:352px;left:1017px">10,9920</div>
<div class="c r" style="top:352px;left:1105px">10,9920</div>
<div class="c r" style="top:352px;left:1193px">12,2810</div>
<div class="c r" style="top:352px;left:1281px">13,5700</div>
<div class="c" style="top:369px;left:33px;width:80px;text-align:right">2500</div>
<div class="c g" style="top:369px;left:137px">7,9920</div>
<div class="c g" style="top:369px;left:225px">7,9920</div>
<div class="c g" style="top:369px;left:313px">7,9920</div>
<div class="c g" style="top:369px;left:401px">7,9920</div>
<div class="c g" style="top:369px;left:489px">7,9920</div>
<div class="c g" style="top:369px;left:577px">7,9920</div>
<div class="c g" style="top:369px;left:665px">7,9920</div>
<div class="c g" style="top:369px;left:753px">7,9920</div>
<div class="c r" style="top:369px;left:841px">10,7341</div>
<div class="c r" style="top:369px;left:929px">11,5076</div>
<div class="c r" style="top:369px;left:1017px">12,5154</div>
<div class="c r" style="top:369px;left:1105px">12,5154</div>
<div class="c r" style="top:369px;left:1193px">13,9919</div>
<div class="c r" style="top:369px;left:1281px">15,4684</div>
<div class="c" style="top:386px;left:33px;width:80px;text-align:right">2750</div>
<div class="c g" style="top:386px;left:137px">7,9920</div>
<div class="c g" style="top:386px;left:225px">7,9920</div>
<div class="c g" style="top:386px;left:313px">7,9920</div>
<div class="c g" style="top:386px;left:401px">7,9920</div>
<div class="c g" style="top:386px;left:489px">7,9920</div>
<div class="c g" style="top:386px;left:577px">7,9920</div>
<div class="c r" style="top:386px;left:665px">9,4685</div>
<div class="c r" style="top:386px;left:753px">10,4529</div>
<div class="c r" style="top:386px;left:841px">11,9997</div>
<div class="c r" style="top:386px;left:929px">12,9841</div>
<div class="c r" style="top:386px;left:1017px">13,9919</div>
<div class="c r" style="top:386px;left:1105px">13,9919</div>
<div class="c r" style="top:386px;left:1193px">15,6325</div>
<div class="c r" style="top:386px;left:1281px">17,2965</div>
<div class="c" style="top:403px;left:33px;width:80px;text-align:right">3000</div>
<div class="c g" style="top:403px;left:137px">7,9451</div>
<div class="c g" style="top:403px;left:225px">7,9451</div>
<div class="c g" style="top:403px;left:313px">7,9451</div>
<div class="c g" style="top:403px;left:401px">7,9451</div>
<div class="c g" style="top:403px;left:489px">8,7889</div>
<div class="c g" style="top:403px;left:577px">9,7264</div>
<div class="c r" style="top:403px;left:665px">11,4607</div>
<div class="c r" style="top:403px;left:753px">12,2107</div>
<div class="c r" style="top:403px;left:841px">13,7106</div>
<div class="c r" style="top:403px;left:929px">14,5075</div>
<div class="c r" style="top:403px;left:1017px">15,2575</div>
<div class="c r" style="top:403px;left:1105px">15,2575</div>
<div class="c r" style="top:403px;left:1193px">17,0387</div>
<div class="c r" style="top:403px;left:1281px">18,8433</div>
<div class="c" style="top:420px;left:33px;width:80px;text-align:right">3500</div>
<div class="c g" style="top:420px;left:137px">10,5701</div>
<div class="c g" style="top:420px;left:225px">10,5701</div>
<div class="c g" style="top:420px;left:313px">10,5701</div>
<div class="c g" style="top:420px;left:401px">10,5701</div>
<div class="c g" style="top:420px;left:489px">11,5779</div>
<div class="c g" style="top:420px;left:577px">12,5388</div>
<div class="c r" style="top:420px;left:665px">14,2263</div>
<div class="c r" style="top:420px;left:753px">15,0700</div>
<div class="c r" style="top:420px;left:841px">16,7106</div>
<div class="c r" style="top:420px;left:929px">17,7418</div>
<div class="c r" style="top:420px;left:1017px">17,7418</div>
<div class="c g" style="top:420px;left:1105px">17,7418</div>
<div class="c r" style="top:420px;left:1193px">19,8277</div>
<div class="c r" style="top:420px;left:1281px">21,9136</div>
<div class="c" style="top:437px;left:33px;width:80px;text-align:right">4000</div>
<div class="c g" style="top:437px;left:137px">13,4997</div>
<div class="c g" style="top:437px;left:225px">13,4997</div>
<div class="c g" style="top:437px;left:313px">13,4997</div>
<div class="c g" style="top:437px;left:401px">13,4997</div>
<div class="c g" style="top:437px;left:489px">14,5309</div>
<div class="c g" style="top:437px;left:577px">15,5153</div>
<div class="c r" style="top:437px;left:665px">17,5074</div>
<div class="c r" style="top:437px;left:753px">18,3746</div>
<div class="c r" style="top:437px;left:841px">19,7808</div>
<div class="c r" style="top:437px;left:929px">20,5074</div>
<div class="c r" style="top:437px;left:1017px">20,5074</div>
<div class="c g" style="top:437px;left:1105px">20,5074</div>
<div class="c r" style="top:437px;left:1193px">22,9214</div>
<div class="c r" style="top:437px;left:1281px">25,3354</div>
<div class="c" style="top:454px;left:33px;width:80px;text-align:right">4250</div>
<div class="c g" style="top:454px;left:137px">15,0466</div>
<div class="c g" style="top:454px;left:225px">15,0466</div>
<div class="c g" style="top:454px;left:313px">15,0466</div>
<div class="c g" style="top:454px;left:401px">15,0466</div>
<div class="c g" style="top:454px;left:489px">16,1950</div>
<div class="c g" style="top:454px;left:577px">17,1324</div>
<div class="c r" style="top:454px;left:665px">19,0074</div>
<div class="c r" style="top:454px;left:753px">19,7808</div>
<div class="c r" style="top:454px;left:841px">22,0073</div>
<div class="c r" style="top:454px;left:929px">22,0073</div>
<div class="c g" style="top:454px;left:1017px">22,0073</div>
<div class="c g" style="top:454px;left:1105px">22,0073</div>
<div class="c r" style="top:454px;left:1193px">24,5854</div>
<div class="c r" style="top:454px;left:1281px">27,1869</div>
<div class="c" style="top:471px;left:33px;width:80px;text-align:right">5000</div>
<div class="c g" style="top:471px;left:137px">19,9918</div>
<div class="c g" style="top:471px;left:225px">19,9918</div>
<div class="c g" style="top:471px;left:313px">19,9918</div>
<div class="c g" style="top:471px;left:401px">19,9918</div>
<div class="c g" style="top:471px;left:489px">19,9918</div>
<div class="c g" style="top:471px;left:577px">19,9918</div>
<div class="c r" style="top:471px;left:665px">23,0854</div>
<div class="c r" style="top:471px;left:753px">23,9761</div>
<div class="c r" style="top:471px;left:841px">26,0385</div>
<div class="c r" style="top:471px;left:929px">26,0385</div>
<div class="c g" style="top:471px;left:1017px">26,0385</div>
<div class="c g" style="top:471px;left:1105px">26,0385</div>
<div class="c r" style="top:471px;left:1193px">29,1088</div>
<div class="c r" style="top:471px;left:1281px">32,1790</div>
<div class="h g" style="top:165px;left:145px">0</div>
<div class="h g" style="top:182px;left:233px">500</div>
<div class="h g" style="top:165px;left:321px">750</div>
<div class="h g" style="top:182px;left:409px">1000</div>
<div class="h g" style="top:165px;left:497px">1500</div>
<div class="h g" style="top:182px;left:585px">2000</div>
<div class="h r" style="top:165px;left:673px">2500</div>
<div class="h r" style="top:182px;left:761px">3000</div>
<div class="h r" style="top:165px;left:849px">4000</div>
<div class="h r" style="top:182px;left:937px">4500</div>
<div class="h r" style="top:165px;left:1025px">5000</div>
<div class="h r" style="top:182px;left:1113px">5500</div>
<div class="h r" style="top:165px;left:1201px">6150</div>
<div class="h r" style="top:182px;left:1289px">6800</div>
<div class="h g" style="top:165px;left:97px">-mg</div>
<div class="h g" style="top:182px;left:73px">-rpm</div>
<div class="h g" style="top:148px;left:729px">-(-,-)/-</div>
<div class="a" style="left:61px;top:497px;width:10px;height:54px;border:1px solid #000;border-left:none;background:#ECE9D8"></div>
<svg class="a" style="left:62px;top:516px" width="8" height="16"><path d="M0 0 L6 7 L0 14Z" fill="#0A1CA0"/></svg>
<div id="vscroll" class="a">
 <div class="sb" style="left:2px;top:1px;width:15px;height:16px"></div>
 <svg class="a" style="left:5px;top:5px" width="10" height="8"><path d="M1 6 L5 2 L9 6" stroke="#4D6185" stroke-width="2" fill="none"/></svg>
 <div class="sb" style="left:2px;top:18px;width:15px;height:576px"></div>
 <div class="a" style="left:6px;top:302px;width:7px;height:9px;background:repeating-linear-gradient(#8CA0D0 0 1px,#EEF3FF 1px 2px)"></div>
 <div class="sb" style="left:2px;top:714px;width:15px;height:16px"></div>
 <svg class="a" style="left:5px;top:718px" width="10" height="8"><path d="M1 2 L5 6 L9 2" stroke="#4D6185" stroke-width="2" fill="none"/></svg>
</div>
<div id="hscroll" class="a">
 <div class="sb" style="left:1px;top:1px;width:16px;height:15px"></div>
 <svg class="a" style="left:5px;top:4px" width="8" height="10"><path d="M6 1 L2 5 L6 9" stroke="#4D6185" stroke-width="2" fill="none"/></svg>
 <div class="sb" style="left:18px;top:1px;width:1252px;height:15px"></div>
 <div class="a" style="left:640px;top:5px;width:9px;height:7px;background:repeating-linear-gradient(90deg,#8CA0D0 0 1px,#EEF3FF 1px 2px)"></div>
 <div class="sb" style="left:1348px;top:1px;width:16px;height:15px"></div>
 <svg class="a" style="left:1352px;top:4px" width="8" height="10"><path d="M2 1 L6 5 L2 9" stroke="#4D6185" stroke-width="2" fill="none"/></svg>
</div>
<div id="palette" class="a"></div>
<div class="a" style="left:1px;top:805px;width:29px;height:31px;background:repeating-conic-gradient(#fff 0 25%,#ECE9D8 0 50%) 0 0/2px 2px;border-top:1px solid #000;border-left:1px solid #000;box-shadow:-1px -1px 0 #ACA899"></div>
<div class="a" style="left:12px;top:818px;width:14px;height:14px;background:#fff;border-right:1px solid #9A9888;border-bottom:1px solid #9A9888"></div>
<div class="a" style="left:5px;top:811px;width:14px;height:13px;background:#000;border:1px solid #fff;border-right-color:#A8A698;border-bottom-color:#A8A698;box-shadow:inset 0 0 0 0 #000"></div>
<div class="a" style="left:32px;top:806px;width:14px;height:14px;background:#000000;border-top:1px solid #000;border-left:1px solid #000;box-shadow:1px 1px 0 #fff"></div>
<div class="a" style="left:32px;top:822px;width:14px;height:14px;background:#FFFFFF;border-top:1px solid #000;border-left:1px solid #000;box-shadow:1px 1px 0 #fff"></div>
<div class="a" style="left:48px;top:806px;width:14px;height:14px;background:#808080;border-top:1px solid #000;border-left:1px solid #000;box-shadow:1px 1px 0 #fff"></div>
<div class="a" style="left:48px;top:822px;width:14px;height:14px;background:#C0C0C0;border-top:1px solid #000;border-left:1px solid #000;box-shadow:1px 1px 0 #fff"></div>
<div class="a" style="left:64px;top:806px;width:14px;height:14px;background:#800000;border-top:1px solid #000;border-left:1px solid #000;box-shadow:1px 1px 0 #fff"></div>
<div class="a" style="left:64px;top:822px;width:14px;height:14px;background:#FF0000;border-top:1px solid #000;border-left:1px solid #000;box-shadow:1px 1px 0 #fff"></div>
<div class="a" style="left:80px;top:806px;width:14px;height:14px;background:#808000;border-top:1px solid #000;border-left:1px solid #000;box-shadow:1px 1px 0 #fff"></div>
<div class="a" style="left:80px;top:822px;width:14px;height:14px;background:#FFFF00;border-top:1px solid #000;border-left:1px solid #000;box-shadow:1px 1px 0 #fff"></div>
<div class="a" style="left:96px;top:806px;width:14px;height:14px;background:#008000;border-top:1px solid #000;border-left:1px solid #000;box-shadow:1px 1px 0 #fff"></div>
<div class="a" style="left:96px;top:822px;width:14px;height:14px;background:#00FF00;border-top:1px solid #000;border-left:1px solid #000;box-shadow:1px 1px 0 #fff"></div>
<div class="a" style="left:112px;top:806px;width:14px;height:14px;background:#008080;border-top:1px solid #000;border-left:1px solid #000;box-shadow:1px 1px 0 #fff"></div>
<div class="a" style="left:112px;top:822px;width:14px;height:14px;background:#00FFFF;border-top:1px solid #000;border-left:1px solid #000;box-shadow:1px 1px 0 #fff"></div>
<div class="a" style="left:128px;top:806px;width:14px;height:14px;background:#000080;border-top:1px solid #000;border-left:1px solid #000;box-shadow:1px 1px 0 #fff"></div>
<div class="a" style="left:128px;top:822px;width:14px;height:14px;background:#0000FF;border-top:1px solid #000;border-left:1px solid #000;box-shadow:1px 1px 0 #fff"></div>
<div class="a" style="left:144px;top:806px;width:14px;height:14px;background:#800080;border-top:1px solid #000;border-left:1px solid #000;box-shadow:1px 1px 0 #fff"></div>
<div class="a" style="left:144px;top:822px;width:14px;height:14px;background:#FF00FF;border-top:1px solid #000;border-left:1px solid #000;box-shadow:1px 1px 0 #fff"></div>
<div class="a" style="left:160px;top:806px;width:14px;height:14px;background:#808040;border-top:1px solid #000;border-left:1px solid #000;box-shadow:1px 1px 0 #fff"></div>
<div class="a" style="left:160px;top:822px;width:14px;height:14px;background:#FFFF80;border-top:1px solid #000;border-left:1px solid #000;box-shadow:1px 1px 0 #fff"></div>
<div class="a" style="left:176px;top:806px;width:14px;height:14px;background:#004040;border-top:1px solid #000;border-left:1px solid #000;box-shadow:1px 1px 0 #fff"></div>
<div class="a" style="left:176px;top:822px;width:14px;height:14px;background:#00FF80;border-top:1px solid #000;border-left:1px solid #000;box-shadow:1px 1px 0 #fff"></div>
<div class="a" style="left:192px;top:806px;width:14px;height:14px;background:#0080FF;border-top:1px solid #000;border-left:1px solid #000;box-shadow:1px 1px 0 #fff"></div>
<div class="a" style="left:192px;top:822px;width:14px;height:14px;background:#80FFFF;border-top:1px solid #000;border-left:1px solid #000;box-shadow:1px 1px 0 #fff"></div>
<div class="a" style="left:208px;top:806px;width:14px;height:14px;background:#004080;border-top:1px solid #000;border-left:1px solid #000;box-shadow:1px 1px 0 #fff"></div>
<div class="a" style="left:208px;top:822px;width:14px;height:14px;background:#8080FF;border-top:1px solid #000;border-left:1px solid #000;box-shadow:1px 1px 0 #fff"></div>
<div class="a" style="left:224px;top:806px;width:14px;height:14px;background:#8000FF;border-top:1px solid #000;border-left:1px solid #000;box-shadow:1px 1px 0 #fff"></div>
<div class="a" style="left:224px;top:822px;width:14px;height:14px;background:#FF0080;border-top:1px solid #000;border-left:1px solid #000;box-shadow:1px 1px 0 #fff"></div>
<div class="a" style="left:240px;top:806px;width:14px;height:14px;background:#804000;border-top:1px solid #000;border-left:1px solid #000;box-shadow:1px 1px 0 #fff"></div>
<div class="a" style="left:240px;top:822px;width:14px;height:14px;background:#FF8040;border-top:1px solid #000;border-left:1px solid #000;box-shadow:1px 1px 0 #fff"></div>
<div id="status" class="a">
<div class="a" style="left:0;top:-1px;width:1440px;height:1px;background:#fff"></div>
<div class="a" style="left:0;top:0;width:1440px;height:2px;background:linear-gradient(#9A978A,#BDBAAC)"></div>
<div class="a" style="left:2px;top:9px;font-size:11px;line-height:13px;white-space:nowrap;letter-spacing:-0.24px">Scegliere Guida in linea dal menu ? per visualizzare la Guida di Paint.</div>
<div class="a" style="left:1200px;top:3px;width:1px;height:20px;background:#C5C2B2"></div><div class="a" style="left:1201px;top:3px;width:1px;height:20px;background:#fff"></div>
<div class="a" style="left:1320px;top:3px;width:1px;height:20px;background:#C5C2B2"></div><div class="a" style="left:1321px;top:3px;width:1px;height:20px;background:#fff"></div>
<div class="a" style="left:1438px;top:3px;width:1px;height:20px;background:#C5C2B2"></div>
</div>
<div id="bottom" class="a">
<div class="a" style="left:0;top:1px;width:1353px;height:30px;border:1px solid #3E5A70;border-left-color:#2E5030;border-top-color:#4A6890;border-bottom-color:#1A2A60;border-right:none"></div>
<div class="a" style="left:1352px;top:1px;width:1px;height:5px;background:#3E5A90"></div>
</div>
</body></html>
